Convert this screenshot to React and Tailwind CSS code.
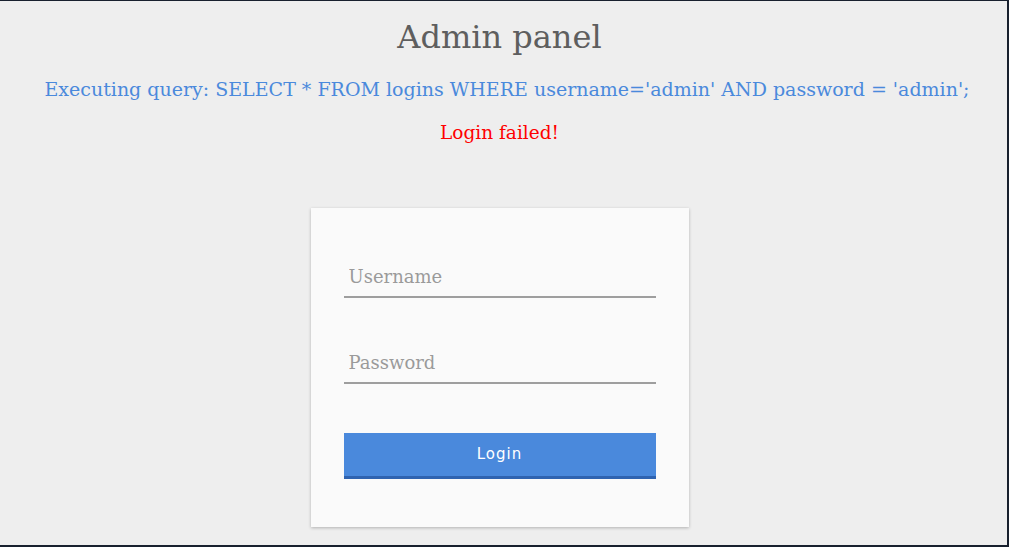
import React from 'react';

export default function App() {
  return (
    <div className="w-[1009px] h-[547px] bg-[#18202e] pt-px pr-[2px] pb-[2px] overflow-hidden">
      <div className="w-full h-full bg-[#eeeeee] pr-[8px] flex flex-col items-center font-['DejaVu_Serif',serif]">
        <h1 className="mt-[16px] text-[32px] leading-[40px] text-[#5e5e5e]">Admin panel</h1>
        <p className="mt-[20px] ml-[15px] whitespace-nowrap text-[19px] leading-[24px] text-[#4a89dc]">
          Executing query: SELECT * FROM logins WHERE username='admin' AND password = 'admin';
        </p>
        <p className="mt-[20px] text-[18.5px] leading-[24px] text-[#ff0000]">Login failed!</p>

        <div className="mt-[63px] w-[378px] bg-[#fafafa] shadow-[0_1px_3px_rgba(0,0,0,0.25)] px-[33px] pt-[51px] pb-[48px]">
          <div className="border-b-2 border-[#9e9e9e] h-[39px] flex items-end pb-[6px] pl-[5px]">
            <input
              placeholder="Username"
              className="w-full bg-transparent outline-none text-[18px] text-[#555] placeholder:text-[#9a9a9a] font-['DejaVu_Serif',serif]"
            />
          </div>
          <div className="mt-[47px] border-b-2 border-[#9e9e9e] h-[39px] flex items-end pb-[6px] pl-[5px]">
            <input
              type="password"
              placeholder="Password"
              className="w-full bg-transparent outline-none text-[18px] text-[#555] placeholder:text-[#9a9a9a] font-['DejaVu_Serif',serif]"
            />
          </div>
          <button className="mt-[49px] w-full h-[46px] bg-[#4a89dc] border-b-[3px] border-[#2f63b0] text-white text-[15px] tracking-[1px] font-['DejaVu_Sans',sans-serif]">
            Login
          </button>
        </div>
      </div>
    </div>
  );
}
